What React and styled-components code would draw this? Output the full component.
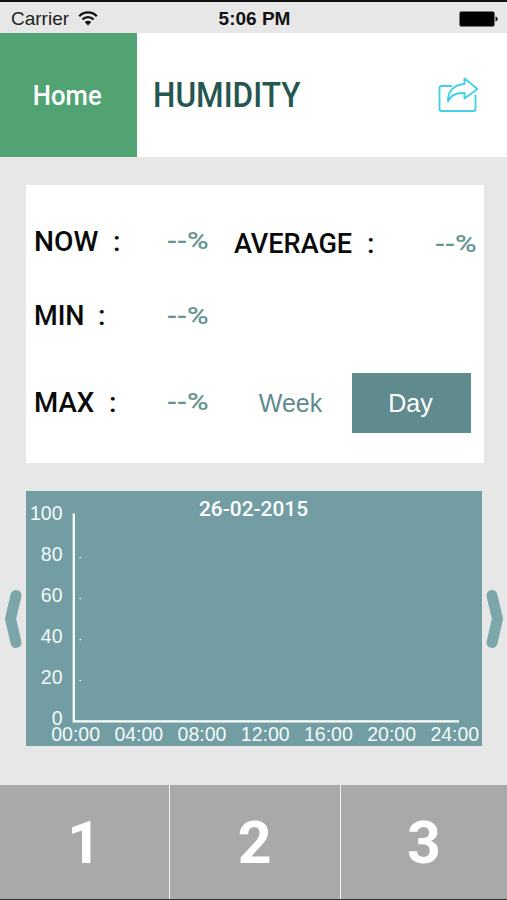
import styled, { createGlobalStyle } from "styled-components";

const colors = {
  page: "#e7e7e7",
  green: "#51a374",
  title: "#25564f",
  teal: "#5f8b8e",
  value: "#689492",
  chart: "#729da3",
  arrow: "#7ba7ab",
  tab: "#a9a9a9",
  cyan: "#45d0e6",
};

const GlobalStyle = createGlobalStyle`
  * {
    box-sizing: border-box;
  }

  body {
    margin: 0;
    background: ${colors.page};
    font-family: "Liberation Sans", Arial, sans-serif;
  }

  button {
    border: 0;
    padding: 0;
    background: none;
    font-family: inherit;
  }
`;

const Screen = styled.div`
  display: flex;
  flex-direction: column;
  width: 507px;
  height: 900px;
  overflow: hidden;
  border-top: 2px solid #111;
  border-bottom: 1px solid #333;
`;

const StatusBar = styled.div`
  display: grid;
  grid-template-columns: 1fr auto 1fr;
  align-items: center;
  height: 31px;
  padding: 2px 9px 0 11px;
  font-size: 19px;
  color: #222;

  .carrier {
    display: flex;
    align-items: center;
    gap: 9px;
  }

  .time {
    font-size: 19px;
    font-weight: 700;
    color: #111;
  }

  .battery {
    justify-self: end;
  }
`;

const Header = styled.header`
  display: flex;
  align-items: center;
  height: 123.5px;
  padding-right: 28px;
  background: #fff;
`;

const HomeButton = styled.button`
  align-self: stretch;
  width: 137px;
  padding: 3px 2px 0 0;
  background: ${colors.green};
  color: #fff;
`;

const ShareButton = styled.button`
  display: flex;
  margin-left: auto;
`;

const Title = styled.h1`
  margin: 0 0 0 16px;
  padding-top: 4px;
  font-weight: 400;
  color: ${colors.title};
`;

const Display = styled.span`
  display: inline-block;
  font-family: Roboto, sans-serif;
  font-size: ${({ $size }) => $size}px;
  font-weight: ${({ $weight }) => $weight || 500};
  line-height: 1;
  white-space: pre;
  transform: scaleX(${({ $stretch }) => $stretch || 1});
  transform-origin: ${({ $origin }) => $origin || "left"};
`;

const Card = styled.section`
  width: 458px;
  height: 278px;
  margin: 28.5px 0 0 26px;
  padding-top: 19px;
  background: #fff;
`;

const Row = styled.div`
  display: flex;
  align-items: center;
  height: ${({ $height }) => $height}px;
  padding: 0 8px;
`;

const Label = styled.div`
  display: flex;
  align-items: center;
  width: ${({ $width }) => $width}px;
  padding-top: ${({ $drop }) => $drop || 1}px;
  color: #0a0a0a;
`;

const Name = styled.div`
  width: ${({ $width }) => $width}px;
`;

const Value = styled.div`
  width: ${({ $width }) => $width || 67}px;
  padding-top: ${({ $drop }) => $drop || 0}px;
  color: ${colors.value};
`;

const RangeButton = styled.button`
  width: 119px;
  height: 60px;
  padding: 2px 2px 0 0;
  background: ${({ $active }) => ($active ? colors.teal : "transparent")};
  color: ${({ $active }) => ($active ? "#fff" : colors.teal)};
  font-size: 25px;
`;

const Ranges = styled.div`
  display: flex;
  gap: 1px;
  margin-left: -2px;
`;

const ChartArea = styled.div`
  display: flex;
  align-items: center;
  justify-content: space-between;
  height: 255px;
  margin-top: 28px;
  padding: 0 3px 0 4px;
`;

const ChartSvg = styled.svg`
  width: 456px;
  height: 255px;
  background: ${colors.chart};
  fill: #f2fafa;
  font-size: 19.5px;

  .date {
    font-family: Roboto, sans-serif;
    font-size: 20.5px;
    font-weight: 500;
    fill: #fff;
  }
`;

const Tabs = styled.nav`
  display: grid;
  grid-template-columns: 168.5px 169.5px 1fr;
  gap: 1.5px;
  height: 114px;
  margin-top: auto;
  background: #f4f4f4;
`;

const Tab = styled.button`
  background: ${colors.tab};
  color: #fff;
`;

const hours = ["00:00", "04:00", "08:00", "12:00", "16:00", "20:00", "24:00"];
const levels = [100, 80, 60, 40, 20, 0];

function WifiIcon() {
  return (
    <svg width="20" height="15" viewBox="0 0 20 15" fill="none" stroke="#111">
      <path d="M1.2 5.2C6.2.2 13.8.2 18.8 5.2" strokeWidth="2.3" />
      <path d="M4.4 8.5c3.2-3.1 8-3.1 11.2 0" strokeWidth="2.3" />
      <path d="M6.7 11.1c1.9-1.7 4.7-1.7 6.6 0L10 14.4z" fill="#111" stroke="none" />
    </svg>
  );
}

function BatteryIcon() {
  return (
    <svg className="battery" width="39" height="16" viewBox="0 0 39 16">
      <rect x=".5" y=".5" width="35" height="15" rx="2" fill="#000" stroke="#777" strokeWidth=".7" />
      <path d="M36.5 5.5c3 .5 3 4.5 0 5z" fill="#222" />
    </svg>
  );
}

function ShareIcon() {
  return (
    <svg
      width="41"
      height="36"
      viewBox="0 0 41 36"
      fill="none"
      stroke={colors.cyan}
      strokeWidth="1.9"
      strokeLinejoin="round"
      strokeLinecap="round"
    >
      <path d="M13.5 9H3.5Q1.5 9 1.5 11V32Q1.5 34 3.5 34H35.5Q37.5 34 37.5 32V18.5" />
      <path d="M26.5 1.5L39.5 12L26.5 21.5V16C18 15.5 12.5 18 10 24.5C9.5 14.5 16 7.5 26.5 7Z" />
    </svg>
  );
}

function Arrow({ right }) {
  return (
    <svg width="18" height="60" viewBox="0 0 18 60">
      <path
        d={right ? "M6 6.5L11.5 30L6 53.5" : "M12 6.5L6.5 30L12 53.5"}
        fill="none"
        stroke={colors.arrow}
        strokeWidth="11"
        strokeLinecap="round"
      />
    </svg>
  );
}

function Stat({ name, nameWidth, labelWidth, stretch, valueWidth, drop }) {
  return (
    <>
      <Label $width={labelWidth} $drop={drop}>
        <Name $width={nameWidth}>
          <Display $size={28.5} $stretch={stretch}>
            {name}
          </Display>
        </Name>
        <Display $size={28.5}>:</Display>
      </Label>
      <Value $width={valueWidth} $drop={drop}>
        <Display $size={24.5} $weight={500} $stretch={1.2}>
          --%
        </Display>
      </Value>
    </>
  );
}

function Chart() {
  return (
    <ChartSvg viewBox="0 0 456 255">
      <text className="date" x="173" y="24.5" textLength="109" lengthAdjust="spacingAndGlyphs">
        26-02-2015
      </text>
      {levels.map((level, i) => (
        <text key={level} x="36.5" y={29 + i * 41} textAnchor="end">
          {level}
        </text>
      ))}
      {[66, 107, 148, 189].map((y) => (
        <rect key={y} x="53.5" y={y} width="1.5" height="1.2" />
      ))}
      <path d="M47.8 22.5V230.3H433" fill="none" stroke="#fff" strokeWidth="2.3" />
      {hours.map((hour, i) => (
        <text key={hour} x={49.6 + i * 63.2} y="250" textAnchor="middle">
          {hour}
        </text>
      ))}
    </ChartSvg>
  );
}

function App() {
  return (
    <>
      <GlobalStyle />
      <Screen>
        <StatusBar>
          <div className="carrier">
            Carrier
            <WifiIcon />
          </div>
          <div className="time">5:06 PM</div>
          <BatteryIcon />
        </StatusBar>
        <Header>
          <HomeButton>
            <Display $size={27} $stretch={0.95} $origin="center">
              Home
            </Display>
          </HomeButton>
          <Title>
            <Display $size={34.5} $stretch={0.915}>
              HUMIDITY
            </Display>
          </Title>
          <ShareButton>
            <ShareIcon />
          </ShareButton>
        </Header>
        <Card>
          <Row $height={75}>
            <Stat name="NOW" nameWidth={79} labelWidth={133} stretch={0.99} />
            <Stat
              name="AVERAGE"
              nameWidth={133}
              labelWidth={201}
              stretch={0.95}
              valueWidth={40}
              drop={5}
            />
          </Row>
          <Row $height={74}>
            <Stat name="MIN" nameWidth={64} labelWidth={133} stretch={0.95} />
          </Row>
          <Row $height={99}>
            <Stat name="MAX" nameWidth={75} labelWidth={133} stretch={0.97} />
            <Ranges>
              <RangeButton>Week</RangeButton>
              <RangeButton $active>Day</RangeButton>
            </Ranges>
          </Row>
        </Card>
        <ChartArea>
          <Arrow />
          <Chart />
          <Arrow right />
        </ChartArea>
        <Tabs>
          {[1, 2, 3].map((n) => (
            <Tab key={n}>
              <Display $size={59} $weight={700} $origin="center">
                {n}
              </Display>
            </Tab>
          ))}
        </Tabs>
      </Screen>
    </>
  );
}

export default App;
